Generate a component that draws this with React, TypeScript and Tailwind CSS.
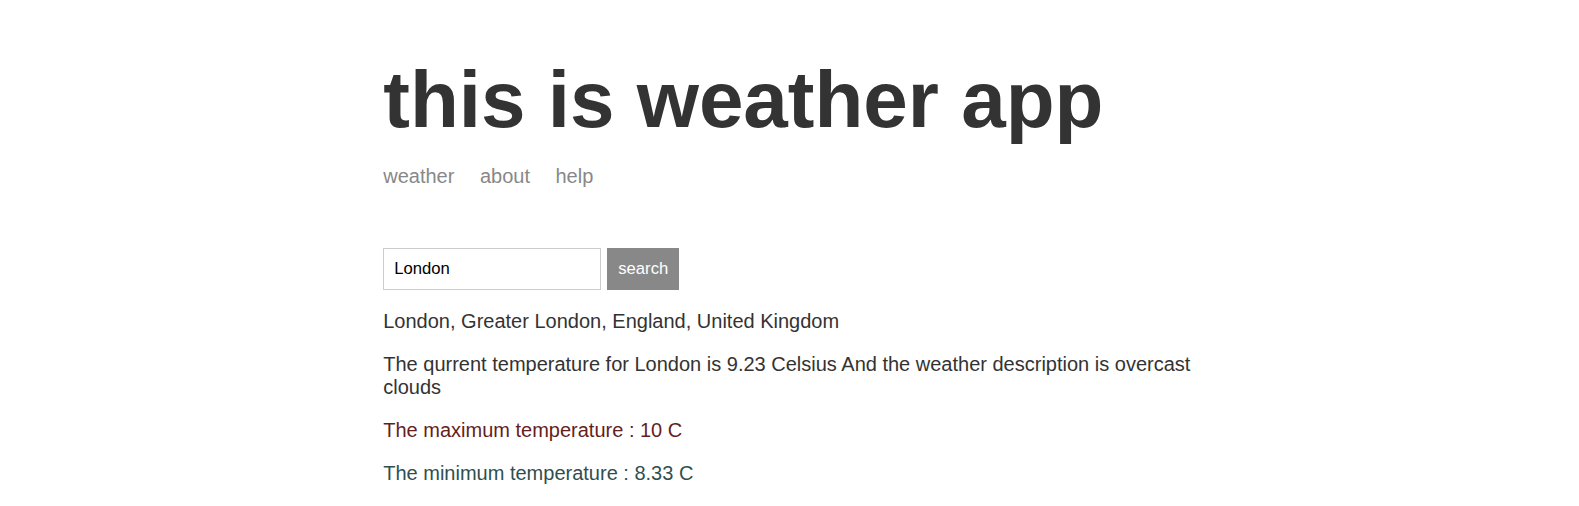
import React from 'react';

export default function App() {
  return (
    <div className="min-h-screen bg-white text-[#333] text-[20px] font-['Liberation_Sans',Arial,sans-serif]">
      <div className="box-content max-w-[812.5px] mx-auto px-5 flex flex-col">
        {/* Header */}
        <header className="mb-[60px]">
          <h1 className="mt-[53.6px] mb-[19px] text-[80px] font-bold leading-[92px]">this is weather app</h1>
          <nav className="flex leading-[23px]">
            <a href="#" className="text-[#888] mr-[25.5px]">weather</a>
            <a href="#" className="text-[#888] mr-[25.5px]">about</a>
            <a href="#" className="text-[#888] mr-[25.5px]">help</a>
          </nav>
        </header>

        {/* Search */}
        <form className="flex items-stretch gap-[6px]" onSubmit={e => e.preventDefault()}>
          <input
            defaultValue="London"
            className="w-[218px] h-[42px] border border-[#ccc] px-[10px] text-[16.67px] text-black outline-none"
          />
          <button type="submit" className="h-[42px] px-[10px] border border-[#888] bg-[#888] text-white text-[16.67px]">
            search
          </button>
        </form>

        <p className="mt-5 leading-[23px]">London, Greater London, England, United Kingdom</p>
        <p className="mt-5 leading-[23px]">
          The qurrent temperature for London is 9.23 Celsius And the weather description is overcast clouds
        </p>
        <p className="mt-5 leading-[23px] text-[#641e1e]">The maximum temperature : 10 C</p>
        <p className="mt-5 leading-[23px] text-[#2f4f4f]">The minimum temperature : 8.33 C</p>
      </div>
    </div>
  );
}
